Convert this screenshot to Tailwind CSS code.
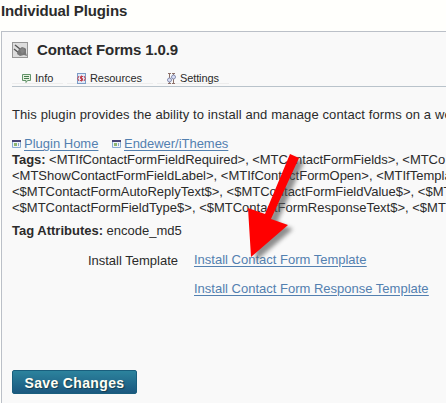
<!DOCTYPE html>
<html lang="en">
<head>
<meta charset="utf-8">
<title>Individual Plugins</title>
<script src="https://cdn.jsdelivr.net/npm/@tailwindcss/browser@4"></script>
</head>
<body class="w-[446px] h-[403px] overflow-hidden bg-[#fffffc] font-['Liberation_Sans',Arial,sans-serif] text-[13px] leading-4 text-[#2b2b2b]">
<div class="relative h-[403px] overflow-hidden">
<h1 class="h-[31px] pl-px pt-[3px] text-[15px] leading-4 font-bold tracking-[-.12px] whitespace-nowrap">Individual Plugins</h1>
<main class="ml-px h-[380px] border-l border-t border-[#bbc0c8] bg-[#f9f9f9] pl-[10px] pt-[10px] whitespace-nowrap">
  <header class="flex h-4 items-center gap-[9px]">
    <svg class="size-4" viewBox="0 0 16 16"><rect x=".5" y=".5" width="15" height="15" fill="#ddd" stroke="#969696"/><path d="M3 3l5 4M2 7l5 4" stroke="#555" stroke-width="1.4"/><path d="M7 7l3-2 3 1 1 1v4l1 3-3-1-4 1-3-2 1-3z" fill="#777"/><path d="M8 8l3-2 2 3-3 3z" fill="#858585"/></svg>
    <h2 class="text-[15px] font-bold tracking-[-.12px]">Contact Forms 1.0.9</h2>
  </header>
  <nav class="mt-[13px] flex h-[16px] gap-1 border-b border-[#b9c3cb] pb-[2px] text-[11px] leading-[13px]">
    <a class="flex h-[13px] w-[51px] items-center border-b border-[#ededed] pl-[10px]"><svg class="mt-[2px] mr-1 size-[9px] shrink-0" viewBox="0 0 9 9"><path d="M.5.5h8v6h-3L4 8.500V6.500H.5z" fill="#e5f0df" stroke="#63946a"/><path d="M2 2.500h5M2 4.500h5" stroke="#477d50"/></svg><span class="relative top-px">Info</span></a>
    <a class="flex h-[13px] w-[86px] items-center border-b border-[#ededed] pl-[10px] tracking-[-.08px]"><svg class="mt-[2px] mr-1 h-[11px] w-[9px] shrink-0" viewBox="0 0 9 11"><rect x=".5" y=".5" width="8" height="10" fill="#e1eaf8" stroke="#7c9cc6"/><path d="M2 3L.7 5.500 2 8M7 3l1.300 2.500L7 8M6 3.500H3.500v2h2v2H3M4.500 2.500v6" fill="none" stroke="#c33c48"/></svg><span class="relative top-px">Resources</span></a>
    <a class="flex h-[13px] w-[72px] items-center border-b border-[#ededed] pl-[10px] tracking-[-.12px]"><svg class="mt-[2px] mr-1 h-[11px] w-[9px] shrink-0" viewBox="0 0 9 11"><path d="M1 .5h3M5 .5h3M1 10.500h3M5 10.500h3M2.500 1v9M6.500 1v9" stroke="#8c7069"/><circle cx="2.500" cy="7" r="2" fill="#dce0f8" stroke="#858cae"/><circle cx="6.500" cy="4" r="2" fill="#dce0f8" stroke="#858cae"/></svg><span class="relative top-px">Settings</span></a>
  </nav>
  <p class="mt-5 h-4 tracking-[.1px]">This plugin provides the ability to install and manage contact forms on a we</p>
  <div class="mt-[13px] flex h-4 text-[#5380b0]">
    <a class="flex w-[100px] items-center"><svg class="mr-[3px] h-[8px] w-[9px]" viewBox="0 0 9 8"><path d="M.5.5h8v7h-8z" fill="#eef3fb" stroke="#8aacd2"/><path d="M0 0h9v2H0z" fill="#494575"/><path d="M2 3h3v3H2z" fill="#8db66f"/><path d="M6.500 3v3" stroke="#86a8cf"/></svg><span class="underline underline-offset-2">Plugin Home</span></a>
    <a class="flex items-center"><svg class="mr-[3px] h-[8px] w-[9px]" viewBox="0 0 9 8"><path d="M.5.5h8v7h-8z" fill="#eef3fb" stroke="#8aacd2"/><path d="M0 0h9v2H0z" fill="#494575"/><path d="M2 3h3v3H2z" fill="#8db66f"/><path d="M6.500 3v3" stroke="#86a8cf"/></svg><span class="underline underline-offset-2 tracking-[-.03px]">Endewer/iThemes</span></a>
  </div>
  <div>
    <p class="tracking-[-.04px]"><b>Tags:</b> &lt;MTIfContactFormFieldRequired&gt;, &lt;MTContactFormFields&gt;, &lt;MTCo</p>
    <p>&lt;MTShowContactFormFieldLabel&gt;, &lt;MTIfContactFormOpen&gt;, &lt;MTIfTempla</p>
    <p>&lt;$MTContactFormAutoReplyText$&gt;, &lt;$MTContactFormFieldValue$&gt;, &lt;$MT</p>
    <p>&lt;$MTContactFormFieldType$&gt;, &lt;$MTContactFormResponseText$&gt;, &lt;$MTF</p>
    <p class="mt-[7px]"><b>Tag Attributes:</b> encode_md5</p>
  </div>
  <div class="mt-[13px] flex">
    <div class="w-[166px] pt-px text-right">Install Template</div>
    <div class="ml-4 flex flex-col items-start gap-[13px] text-[#5380b0] underline underline-offset-2"><a>Install Contact Form Template</a><a>Install Contact Form Response Template</a></div>
  </div>
  <button class="mt-[73px] block h-6 w-[125px] rounded-[2px] border border-[#195e7d] bg-linear-to-b from-[#2c839d] to-[#1b587f] pt-px text-[14px] leading-[22px] font-bold tracking-[.35px] text-[#fffff5] [text-shadow:1px_1px_1px_#173c4d]">Save Changes</button>
</main>
<svg class="absolute left-0 top-0 h-[403px] w-[446px]" viewBox="0 0 446 403"><path d="M289 154l10 4-27 61 16 6-37 32-3-49 16 6z" transform="translate(5 4)" fill="#555" opacity=".65" class="blur-[2px]"/><path d="M290 154l9 4-28 61 17 6-37 32-3-49 17 6z" fill="#f00"/></svg>
</div>
</body>
</html>
